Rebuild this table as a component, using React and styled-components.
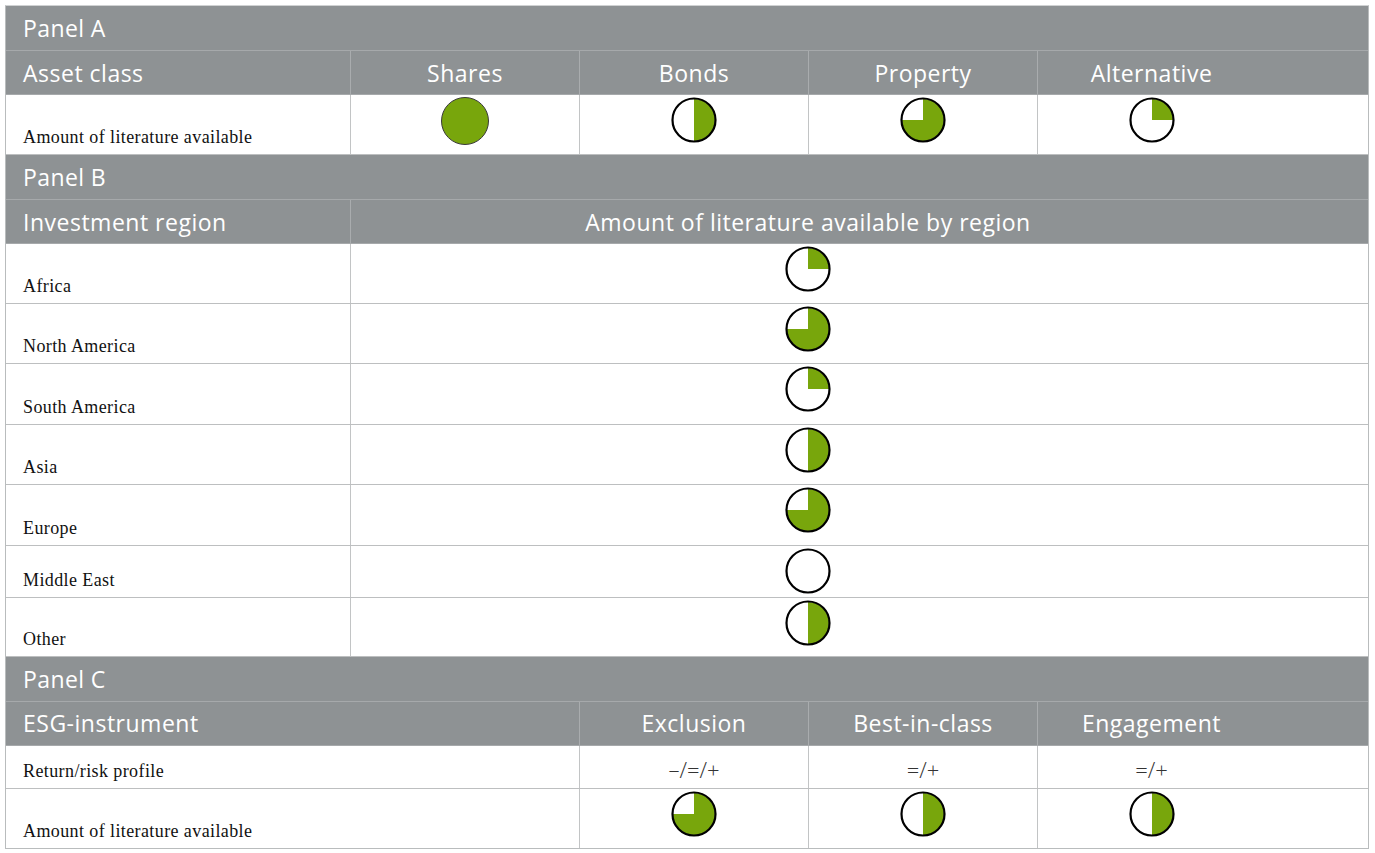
import React from "react";
import styled, { createGlobalStyle } from "styled-components";

const GREEN = "#78a60c";
const GRAY = "#8e9294";

const Global = createGlobalStyle`
  body {
    margin: 0;
    background: #ffffff;
  }
`;

const Page = styled.div`
  padding: 5px 6px 5px 5px;
`;

const Table = styled.div`
  border: 1px solid #b9bcbd;
  border-top-color: #d0d2d3;
  display: flex;
  flex-direction: column;
`;

const Row = styled.div`
  display: grid;
  grid-template-columns: 344px 229px 229px 229px 1fr;
  height: ${p => p.h}px;
  box-sizing: border-box;
  background: ${p => (p.dark ? GRAY : "#ffffff")};
  border-bottom: ${p => (p.last ? "none" : p.dark ? "1.5px solid #a6a9ab" : "1.5px solid #bdbfc0")};
`;

const PanelTitle = styled.div`
  grid-column: 1 / -1;
  display: flex;
  align-items: center;
  padding-left: 17px;
  color: #ffffff;
  font-family: "Open Sans", sans-serif;
  font-size: 23px;
  letter-spacing: 0.4px;
`;

const Cell = styled.div`
  grid-column: span ${p => p.span || 1};
  display: flex;
  box-sizing: border-box;
  border-left: ${p => (p.first ? "none" : p.dark ? "1.5px solid #a9acae" : "1.5px solid #c2c4c5")};
  padding-right: ${p => (p.trail ? 103 : 0)}px;
`;

const HeadCell = styled(Cell)`
  align-items: center;
  justify-content: ${p => (p.first ? "flex-start" : "center")};
  padding-left: ${p => (p.first ? 17 : 0)}px;
  color: #ffffff;
  font-family: "Open Sans", sans-serif;
  font-size: 23px;
  letter-spacing: 0.5px;
`;

const LabelCell = styled(Cell)`
  align-items: flex-end;
  padding-left: 17px;
  padding-bottom: 6px;
  color: #111111;
  font-family: "Liberation Serif", serif;
  font-size: 18px;
  letter-spacing: 0.4px;
`;

const BallCell = styled(Cell)`
  align-items: flex-start;
  justify-content: center;
  padding-top: 2px;
`;

const SignCell = styled(Cell)`
  align-items: center;
  justify-content: center;
  padding-top: 4px;
  color: #333333;
  font-family: "Open Sans", sans-serif;
  font-size: 22px;
  font-weight: 300;
`;

const Harvey = ({ value }) => {
  if (value === 100) {
    return (
      <svg width="48" height="48" viewBox="0 0 48 48">
        <circle cx="24" cy="24" r="23.5" fill={GREEN} stroke="#3a3a3a" strokeWidth="1" />
      </svg>
    );
  }
  let d = null;
  if (value === 25) d = "M23 23 L23 2 A21 21 0 0 1 44 23 Z";
  if (value === 50) d = "M23 2 A21 21 0 0 1 23 44 Z";
  if (value === 75) d = "M23 23 L23 2 A21 21 0 1 1 2 23 Z";
  return (
    <svg width="46" height="46" viewBox="0 0 46 46">
      <circle cx="23" cy="23" r="21.5" fill="#ffffff" />
      {d && <path d={d} fill={GREEN} />}
      <circle cx="23" cy="23" r="21.5" fill="none" stroke="#000000" strokeWidth="2.2" />
    </svg>
  );
};

const assets = [
  { name: "Shares", v: 100 },
  { name: "Bonds", v: 50 },
  { name: "Property", v: 75 },
  { name: "Alternative", v: 25 },
];

const regions = [
  { name: "Africa", v: 25, h: 59.5 },
  { name: "North America", v: 75, h: 60.5 },
  { name: "South America", v: 25, h: 60.5 },
  { name: "Asia", v: 50, h: 60.5 },
  { name: "Europe", v: 75, h: 60.5 },
  { name: "Middle East", v: 0, h: 52 },
  { name: "Other", v: 50, h: 59 },
];

const instruments = [
  { name: "Exclusion", sign: "–/=/+", v: 75 },
  { name: "Best-in-class", sign: "=/+", v: 50 },
  { name: "Engagement", sign: "=/+", v: 50 },
];

export default function App() {
  return (
    <Page>
      <Global />
      <Table>
        <Row dark h={45}>
          <PanelTitle>Panel A</PanelTitle>
        </Row>
        <Row dark h={44}>
          <HeadCell first dark>Asset class</HeadCell>
          {assets.map((a, i) => (
            <HeadCell key={a.name} dark trail={i === assets.length - 1}>
              {a.name}
            </HeadCell>
          ))}
        </Row>
        <Row h={60}>
          <LabelCell first>Amount of literature available</LabelCell>
          {assets.map((a, i) => (
            <BallCell key={a.name} trail={i === assets.length - 1}>
              <Harvey value={a.v} />
            </BallCell>
          ))}
        </Row>

        <Row dark h={45}>
          <PanelTitle>Panel B</PanelTitle>
        </Row>
        <Row dark h={44}>
          <HeadCell first dark>Investment region</HeadCell>
          <HeadCell dark span={4} trail>Amount of literature available by region</HeadCell>
        </Row>
        {regions.map(r => (
          <Row key={r.name} h={r.h}>
            <LabelCell first>{r.name}</LabelCell>
            <BallCell span={4} trail>
              <Harvey value={r.v} />
            </BallCell>
          </Row>
        ))}

        <Row dark h={45}>
          <PanelTitle>Panel C</PanelTitle>
        </Row>
        <Row dark h={44}>
          <HeadCell first dark span={2}>ESG-instrument</HeadCell>
          {instruments.map((x, i) => (
            <HeadCell key={x.name} dark trail={i === instruments.length - 1}>
              {x.name}
            </HeadCell>
          ))}
        </Row>
        <Row h={43}>
          <LabelCell first span={2}>Return/risk profile</LabelCell>
          {instruments.map((x, i) => (
            <SignCell key={x.name} trail={i === instruments.length - 1}>
              {x.sign}
            </SignCell>
          ))}
        </Row>
        <Row h={59} last>
          <LabelCell first span={2}>Amount of literature available</LabelCell>
          {instruments.map((x, i) => (
            <BallCell key={x.name} trail={i === instruments.length - 1}>
              <Harvey value={x.v} />
            </BallCell>
          ))}
        </Row>
      </Table>
    </Page>
  );
}
